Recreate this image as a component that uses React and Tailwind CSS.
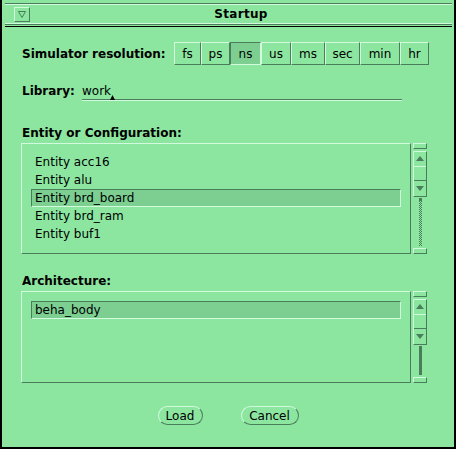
import React from 'react';

const LIGHT = 'border-[#d2fadc]';
const units = [
  { label: 'fs', w: 'w-[27px]' },
  { label: 'ps', w: 'w-[29px]' },
  { label: 'ns', w: 'w-[31px]', on: true },
  { label: 'us', w: 'w-[30px]' },
  { label: 'ms', w: 'w-[34px]' },
  { label: 'sec', w: 'w-[35px]' },
  { label: 'min', w: 'w-[40px]' },
  { label: 'hr', w: 'w-[29px]' },
];

const entities = ['Entity acc16', 'Entity alu', 'Entity brd_board', 'Entity brd_ram', 'Entity buf1'];

const Arrow = ({ down }) => (
  <svg width="10" height="6" viewBox="0 0 10 6" className="block">
    {down ? <polygon points="1,0 9,0 5,5" fill="#4a7d5b" /> : <polygon points="5,0 9,5 1,5" fill="#4a7d5b" />}
  </svg>
);

const ScrollBar = ({ checkered, cableH }) => (
  <div className="w-[14px] flex flex-col">
    <div className={`h-[6px] border border-t-[#d2fadc] border-l-[#d2fadc] border-r-[#4a7d5b] border-b-[#4a7d5b]`} />
    <div className="h-[46px] mt-[2px] flex flex-col border border-t-[#d2fadc] border-l-[#d2fadc] border-r-[#4a7d5b] border-b-[#4a7d5b]">
      <div className="h-[15px] flex items-center justify-center border-b border-[#d2fadc]"><Arrow /></div>
      <div className="h-[14px] border-b border-[#4a7d5b]" />
      <div className="flex-1 flex items-center justify-center"><Arrow down /></div>
    </div>
    <div className="flex-1 flex flex-col items-center pt-px">
      {checkered ? (
        <>
          <div className="w-[3px] h-[3px] bg-[#4a7d5b]" />
          <svg width="3" height={cableH} className="block">
            <defs>
              <pattern id="chk" width="2" height="2" patternUnits="userSpaceOnUse">
                <rect x="0" y="0" width="1" height="1" fill="#4a7d5b" />
                <rect x="1" y="1" width="1" height="1" fill="#4a7d5b" />
              </pattern>
            </defs>
            <rect width="3" height={cableH} fill="url(#chk)" />
          </svg>
        </>
      ) : (
        <div className="w-[3px] bg-[#4a7d5b]" style={{ height: cableH }} />
      )}
    </div>
    <div className="h-[6px] border border-t-[#d2fadc] border-l-[#d2fadc] border-r-[#4a7d5b] border-b-[#4a7d5b]" />
  </div>
);

const Row = ({ text, selected }) => (
  <div
    className={`h-[18px] flex items-center pl-[3px] border ${
      selected
        ? 'bg-[#7ccf91] border-t-[#4a7d5b] border-l-[#4a7d5b] border-r-[#d2fadc] border-b-[#d2fadc]'
        : 'border-transparent'
    }`}
  >
    {text}
  </div>
);

export default function App() {
  return (
    <div
      className="w-[456px] h-[449px] bg-[#8ce6a0] border-l-2 border-r-2 border-b-2 border-black flex flex-col text-black text-[12px]"
      style={{ fontFamily: '"DejaVu Sans", sans-serif' }}
    >
      {/* title bar */}
      <div className="pt-[3px] ml-[3px] mr-[2px]">
        <div className="h-px bg-[#4a7d5b]" />
        <div className="h-px bg-[#d2fadc]" />
        <div className="h-[18px] flex items-center">
          <div className="ml-[9px] w-[16px] h-[15px] border border-t-[#d2fadc] border-l-[#d2fadc] border-r-[#4a7d5b] border-b-[#4a7d5b] flex items-center justify-center">
            <svg width="8" height="7" viewBox="0 0 8 7" className="block">
              <polygon points="0.5,0.5 7.5,0.5 4,6.5" fill="none" stroke="#4a7d5b" strokeWidth="1" />
            </svg>
          </div>
          <div className="flex-1 text-center font-bold leading-[18px] tracking-[0.3px]">Startup</div>
        </div>
        <div className="h-px bg-[#d2fadc]" />
        <div className="h-px bg-[#4a7d5b]" />
        <div className="h-px" />
        <div className="h-px bg-black" />
      </div>

      <div className="pl-[19px] flex flex-col">
        {/* resolution */}
        <div className="mt-[15px] h-[23px] flex items-center">
          <div className="w-[153px] pl-[1px] font-bold">Simulator resolution:</div>
          <div className="flex h-[23px]">
            {units.map((u) => (
              <div
                key={u.label}
                className={`${u.w} h-[23px] flex items-center justify-center border ${
                  u.on
                    ? 'bg-[#7ccf91] border-t-[#4a7d5b] border-l-[#4a7d5b] border-r-[#d2fadc] border-b-[#d2fadc]'
                    : 'border-t-[#d2fadc] border-l-[#d2fadc] border-r-[#4a7d5b] border-b-[#4a7d5b]'
                }`}
              >
                {u.label}
              </div>
            ))}
          </div>
        </div>

        {/* library */}
        <div className="mt-[19px] flex">
          <div className="w-[61px] pl-[1px] font-bold leading-[15px]">Library:</div>
          <div className="w-[320px] flex flex-col relative">
            <div className="h-[15px] leading-[15px]">work</div>
            <div className="h-px bg-[#4a7d5b]" />
            <div className="h-px bg-[#d2fadc]" />
            <svg width="5" height="5" viewBox="0 0 5 5" className="absolute left-[28px] top-[11px]">
              <polygon points="2.5,0 5,5 0,5" fill="#000" />
            </svg>
          </div>
        </div>

        {/* entity */}
        <div className="mt-[25px] h-[14px] leading-[14px] pl-[1px] font-bold">Entity or Configuration:</div>
        <div className="mt-[3px] flex gap-[2px]">
          <div className="w-[390px] h-[111px] p-[9px] border border-t-[#d2fadc] border-l-[#d2fadc] border-r-[#4a7d5b] border-b-[#4a7d5b]">
            {entities.map((e, i) => (
              <Row key={e} text={e} selected={i === 2} />
            ))}
          </div>
          <ScrollBar checkered cableH={45} />
        </div>

        {/* architecture */}
        <div className="mt-[20px] h-[14px] leading-[14px] pl-[1px] font-bold">Architecture:</div>
        <div className="mt-[3px] flex gap-[2px]">
          <div className="w-[390px] h-[92px] p-[9px] border border-t-[#d2fadc] border-l-[#d2fadc] border-r-[#4a7d5b] border-b-[#4a7d5b]">
            <Row text="beha_body" selected />
          </div>
          <ScrollBar cableH={29} />
        </div>
      </div>

      {/* buttons */}
      <div className="mt-[23px] flex justify-center gap-[38px]">
        <div className="w-[45px] h-[19px] rounded-full border border-t-[#d2fadc] border-l-[#d2fadc] border-r-[#4a7d5b] border-b-[#4a7d5b] flex items-center justify-center">Load</div>
        <div className="w-[58px] h-[19px] rounded-full border border-t-[#d2fadc] border-l-[#d2fadc] border-r-[#4a7d5b] border-b-[#4a7d5b] flex items-center justify-center">Cancel</div>
      </div>
    </div>
  );
}
